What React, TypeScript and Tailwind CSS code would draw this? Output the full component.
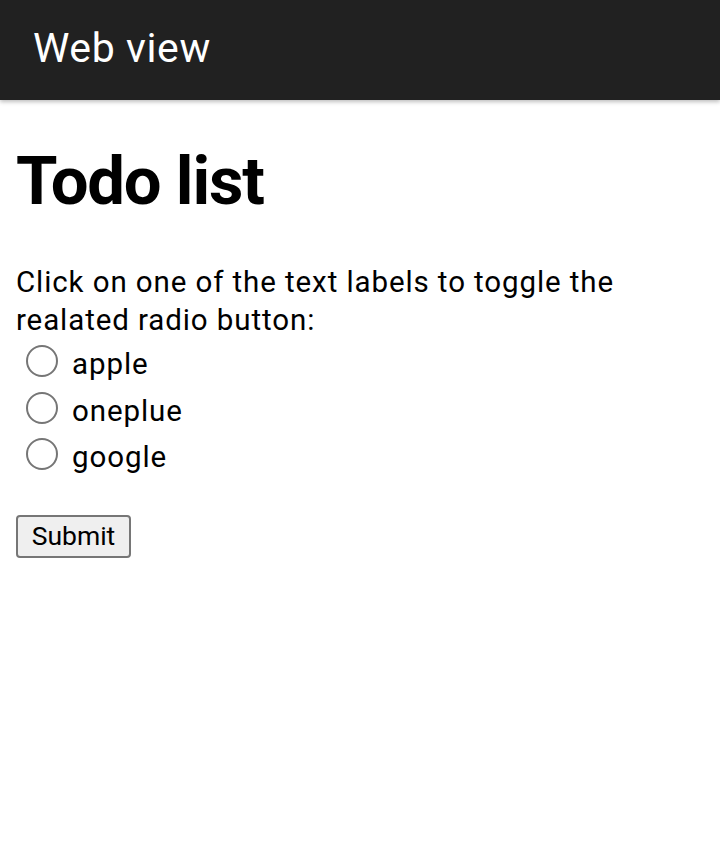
import React from "react";

export default function App() {
  const items = ["apple", "oneplue", "google"];
  return (
    <div className="min-h-[863px] bg-white" style={{ fontFamily: "Roboto, 'Liberation Sans', sans-serif" }}>
      <div className="h-[100px] bg-[#212121] flex items-center pl-[33px] shadow-[0_2px_4px_rgba(0,0,0,0.25)]">
        <span className="text-white text-[41px] leading-none pb-[4px] tracking-[0.6px]" style={{ fontFamily: "Roboto, sans-serif" }}>Web view</span>
      </div>
      <div className="px-[16px]">
        <h1 className="text-[67px] font-bold text-black leading-[80px] mt-[41px] tracking-[-1.2px]">Todo list</h1>
        <p className="text-[29.5px] leading-[38px] text-black mt-[42px] tracking-[0.9px]">
          Click on one of the text labels to toggle the realated radio button:
        </p>
        <div className="flex flex-col mt-[2px]">
          {items.map((it) => (
            <label key={it} className="flex items-center h-[46.5px] text-[29.5px] text-black tracking-[0.9px]">
              <span className="ml-[10px] w-[32px] h-[32px] rounded-full border-[2px] border-[#767676] bg-white shrink-0 -mt-[6px]" />
              <span className="ml-[14px]">{it}</span>
            </label>
          ))}
        </div>
        <button className="mt-[34px] h-[43px] w-[115px] bg-[#efefef] border-[2px] border-[#767676] rounded-[4px] text-[26.5px] text-black leading-none flex items-center justify-center">
          Submit
        </button>
      </div>
    </div>
  );
}
